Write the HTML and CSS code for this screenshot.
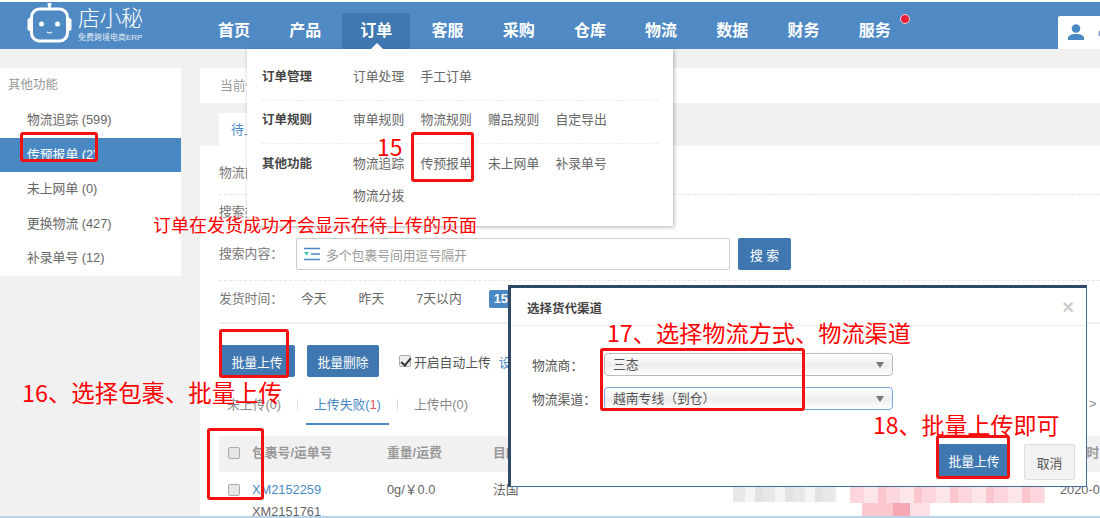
FILE: index.html
```html
<!DOCTYPE html>
<html lang="zh-CN">
<head>
<meta charset="utf-8">
<title>店小秘</title>
<link rel="stylesheet" href="styles.css">
</head>
<body>
<header class="topbar">
  <div class="logo">
    <svg class="robot" viewBox="0 0 46 40" width="46" height="40" aria-hidden="true">
      <path d="M22.500 0v5" stroke="#fff" stroke-width="2.500" fill="none"/>
      <circle cx="22.500" cy="1.500" r="2" fill="#fff"/>
      <rect x="4.500" y="6" width="36" height="32" rx="8" fill="none" stroke="#fff" stroke-width="3"/>
      <path d="M4 15h-1a2.500 2.500 0 0 0-2.500 2.500v8a2.500 2.500 0 0 0 2.500 2.500h1zM41 15h1a2.500 2.500 0 0 1 2.500 2.500v8a2.500 2.500 0 0 1-2.500 2.500h-1z" fill="#fff"/>
      <circle cx="14.500" cy="21" r="2.500" fill="#fff"/>
      <circle cx="30.500" cy="21" r="2.500" fill="#fff"/>
      <path d="M20 29q2.500 2 5 0" stroke="#fff" stroke-width="1.200" fill="none"/>
    </svg>
    <div class="brand">
      <div class="brand-name">店小秘</div>
      <div class="brand-sub">免费跨境电商ERP</div>
    </div>
  </div>
  <nav class="nav">
    <a class="nav-item">首页</a>
    <a class="nav-item">产品</a>
    <a class="nav-item nav-active">订单</a>
    <a class="nav-item">客服</a>
    <a class="nav-item">采购</a>
    <a class="nav-item">仓库</a>
    <a class="nav-item">物流</a>
    <a class="nav-item">数据</a>
    <a class="nav-item">财务</a>
    <a class="nav-item">服务<i class="dot"></i></a>
  </nav>
  <div class="user">
    <svg class="user-icon" viewBox="0 0 18 16" width="18" height="16" aria-hidden="true">
      <circle cx="9" cy="4.500" r="4.300" fill="#4a88c4"/>
      <path d="M1 16v-2c0-2.500 3.500-4 8-4s8 1.500 8 4v2z" fill="#4a88c4"/>
    </svg>
    <span class="user-name">c</span>
  </div>
</header>

<div class="page">
  <aside class="side">
    <div class="side-title">其他功能</div>
    <a class="side-item">物流追踪 (599)</a>
    <a class="side-item side-active">传预报单 (2)</a>
    <a class="side-item">未上网单 (0)</a>
    <a class="side-item">更换物流 (427)</a>
    <a class="side-item">补录单号 (12)</a>
  </aside>

  <main class="main">
    <div class="crumb">当前位置</div>
    <div class="tabs-top"><span class="tab-top">待上传</span></div>
    <section class="panel">
      <div class="row row-carrier"><span class="lbl">物流商：</span></div>
      <div class="row row-kind"><span class="lbl">搜索类型：</span></div>
      <div class="row row-search">
        <span class="lbl">搜索内容：</span>
        <div class="search-box">
          <svg viewBox="0 0 16 14" width="16" height="14" aria-hidden="true">
            <path d="M0 1.500h16M7 7h9M0 12.500h16" stroke="#4a88c4" stroke-width="1.600" fill="none"/>
            <path d="M0 5h5L2.500 8.500z" fill="#3cc0b0"/>
          </svg>
          <span class="placeholder">多个包裹号间用逗号隔开</span>
        </div>
        <button class="btn btn-search">搜 索</button>
      </div>
      <div class="row row-time">
        <span class="lbl">发货时间：</span>
        <span class="time">今天</span><span class="time">昨天</span><span class="time">7天以内</span><span class="time time-on">15天以内</span>
      </div>
      <div class="actions">
        <button class="btn btn-action">批量上传</button>
        <button class="btn btn-action">批量删除</button>
        <label class="auto"><span class="check check-on"></span>开启自动上传</label>
        <a class="link">设置</a>
      </div>
      <div class="subtabs">
        <span class="subtab">未上传(0)</span>
        <span class="subtab subtab-on">上传失败(<b>1</b>)</span>
        <span class="subtab">上传中(0)</span>
        <span class="pager">&gt;</span>
      </div>
      <div class="thead">
        <span class="c-check"><span class="check"></span></span>
        <span class="c-id">包裹号/运单号</span>
        <span class="c-weight">重量/运费</span>
        <span class="c-dest">目的地</span>
        <span class="c-date">发货时间</span>
      </div>
      <div class="trow">
        <span class="c-check"><span class="check"></span></span>
        <span class="c-id"><a class="link">XM2152259</a><br>XM2151761</span>
        <span class="c-weight">0g/￥0.0</span>
        <span class="c-dest">法国</span>
        <span class="mosaic mosaic-grey"></span>
        <span class="mosaic mosaic-pink"></span>
        <span class="mosaic mosaic-pink2"></span>
        <span class="c-date">2020-0</span>
      </div>
    </section>
  </main>
</div>
<div class="bottom-strip"></div>

<div class="menu">
  <i class="menu-arrow"></i>
  <div class="menu-row menu-first"><b class="menu-head">订单管理</b><a class="menu-link">订单处理</a><a class="menu-link">手工订单</a></div>
  <div class="menu-row"><b class="menu-head">订单规则</b><a class="menu-link">审单规则</a><a class="menu-link">物流规则</a><a class="menu-link">赠品规则</a><a class="menu-link">自定导出</a></div>
  <div class="menu-row menu-last"><b class="menu-head">其他功能</b><a class="menu-link">物流追踪</a><a class="menu-link">传预报单</a><a class="menu-link">未上网单</a><a class="menu-link">补录单号</a><a class="menu-link menu-wrap">物流分拨</a></div>
</div>

<div class="modal">
  <div class="modal-head"><span class="modal-title">选择货代渠道</span><span class="modal-x">×</span></div>
  <div class="modal-body">
    <div class="field"><span class="field-lbl">物流商：</span><div class="select">三态<i class="caret"></i></div></div>
    <div class="field"><span class="field-lbl">物流渠道：</span><div class="select select-focus">越南专线（到仓）<i class="caret"></i></div></div>
  </div>
  <div class="modal-foot">
    <button class="btn btn-primary">批量上传</button>
    <button class="btn btn-cancel">取消</button>
  </div>
</div>

<span class="note note-15">15</span>
<span class="note note-tip">订单在发货成功才会显示在待上传的页面</span>
<span class="note note-16">16、选择包裹、批量上传</span>
<span class="note note-17">17、选择物流方式、物流渠道</span>
<span class="note note-18">18、批量上传即可</span>
<i class="mark mark-side"></i>
<i class="mark mark-menu"></i>
<i class="mark mark-upload"></i>
<i class="mark mark-check"></i>
<i class="mark mark-select"></i>
<i class="mark mark-confirm"></i>
</body>
</html>
```

FILE: styles.css
```css
* { box-sizing: border-box; }
html, body { margin: 0; padding: 0; }
body {
  position: relative;
  width: 1100px;
  height: 518px;
  overflow: hidden;
  background: #f1f1f1;
  font-family: "Liberation Sans", "Noto Sans CJK SC", sans-serif;
  font-size: 12.800px;
  color: #666;
  padding-top: 2px;
  display: flex;
  flex-direction: column;
}
body::before { content: ""; position: absolute; left: 0; top: 0; width: 100%; height: 2px; background: #fff; }
a { color: inherit; text-decoration: none; }
button { font-family: inherit; cursor: pointer; }

.topbar { flex: none; height: 47px; background: #4f8ac5; display: flex; position: relative; }
.logo { width: 200px; flex: none; display: flex; padding-left: 27px; }
.robot { flex: none; margin-top: 1px; }
.brand { margin-left: 5px; color: #fff; }
.brand-name { font-size: 22px; line-height: 26px; margin-top: 4px; font-weight: 300; letter-spacing: -0.500px; }
.brand-sub { font-size: 8px; line-height: 10px; margin-top: 1px; opacity: .85; white-space: nowrap; }
.nav { display: flex; gap: 3.200px; padding-top: 11px; }
.nav-item { width: 68px; height: 36px; line-height: 36px; text-align: center; color: #fff; font-size: 16px; font-weight: 700; position: relative; border-radius: 2px 2px 0 0; }
.nav-active { background: #3f78b0; }
.dot { position: absolute; right: -1px; top: 1px; width: 10px; height: 10px; border-radius: 50%; background: #e8213a; border: 1px solid #f3c9cf; }
.user { position: absolute; left: 1058px; top: 14px; width: 42px; height: 33px; background: #fff; border-radius: 2px 0 0 0; padding: 8px 0 0 9px; display: flex; gap: 13px; overflow: hidden; }
.user-icon { flex: none; }
.user-name { color: #4a88c4; font-size: 13px; line-height: 18px; }

.page { flex: 1; min-height: 0; display: flex; padding-top: 19px; overflow: hidden; }
.side { flex: none; width: 181px; height: 208px; background: #fff; }
.side-title { height: 35px; line-height: 35px; padding-left: 8px; color: #999; font-size: 12.500px; }
.side-item { display: block; height: 34.500px; line-height: 33px; padding-left: 27px; color: #666; }
.side-active { background: #4a88c4; color: #fff; }

.main { flex: none; width: 900px; margin-left: 19px; }
.crumb { height: 35px; background: #fff; line-height: 35px; padding-left: 20px; color: #999; }
.tabs-top { height: 43px; padding: 10px 0 0 19px; }
.tab-top { display: block; width: 100px; height: 33px; background: #fff; line-height: 33px; padding-left: 12px; color: #4a88c4; }
.panel { background: #fff; padding: 0 0 0 19px; height: 400px; }
.row { display: flex; }
.lbl { width: 77px; flex: none; color: #777; }
.row-carrier { height: 49px; padding-top: 18px; line-height: 18px; border-bottom: 1px dashed #e6e6e6; }
.row-kind { height: 43px; padding-top: 8px; line-height: 18px; }
.row-search { height: 43px; border-bottom: 1px dashed #e6e6e6; }
.row-search .lbl { line-height: 32px; }
.search-box { width: 434px; height: 32px; border: 1px solid #ccc; border-radius: 2px; display: flex; align-items: center; padding-left: 7px; gap: 6px; flex: none; }
.placeholder { color: #999; }
.btn { border: 0; padding: 0; border-radius: 2px; color: #fff; background: #3f78b0; font-size: 12.800px; }
.btn-search { width: 53px; height: 32px; margin-left: 8px; }
.row-time { height: 43px; border-bottom: 2px solid #eee; padding-top: 9px; line-height: 18px; align-items: flex-start; }
.time { color: #666; margin-right: 32px; }
.lbl + .time { margin-left: 5px; }
.time-on { background: #4a88c4; color: #fff; padding: 0 5px; border-radius: 2px; font-weight: 700; margin-left: -5px; }
.actions { height: 62px; display: flex; align-items: flex-start; padding-top: 21px; }
.btn-action { height: 32px; width: 76px; margin-right: 12px; }
.btn-action + .btn-action { width: 72px; }
.auto { display: flex; align-items: center; height: 32px; margin-left: 8px; color: #555; gap: 3px; }
.link { color: #4a88c4; }
.actions .link { margin: 7px 0 0 8px; }
.check { display: inline-block; width: 12px; height: 12px; border: 1px solid #aaa; border-radius: 2px; background: #e6e6e6; position: relative; }
.check-on { background: #eee; }
.check-on::after { content: ""; position: absolute; left: 3px; top: 0; width: 4px; height: 8px; border: solid #333; border-width: 0 2px 2px 0; transform: rotate(40deg); }
.subtabs { height: 39px; display: flex; position: relative; }
.subtab { height: 39px; line-height: 37px; padding: 0 8px; margin-right: 17px; color: #888; position: relative; }
.subtab + .subtab::before { content: ""; position: absolute; left: -9px; top: 13px; height: 11px; width: 1px; background: #ddd; }
.subtab-on { color: #4a88c4; border-bottom: 2px solid #4a88c4; }
.subtab-on b { color: #e8505b; font-weight: 400; }
.pager { position: absolute; left: 870px; top: 10px; color: #888; }
.thead { margin-top: 11px; height: 36px; background: #f1f1f1; display: flex; align-items: center; color: #999; font-weight: 700; line-height: 18px; padding-bottom: 2px; position: relative; }
.thead .c-check { padding-top: 3px; }
.trow { height: 46px; display: flex; padding-top: 7px; color: #666; line-height: 22px; position: relative; }
.c-check { width: 33px; padding-left: 9px; flex: none; }
.trow .c-check { padding-top: 2px; }
.c-id { width: 135px; flex: none; }
.c-weight { width: 106px; flex: none; }
.c-dest { width: 60px; flex: none; }
.thead .c-date { position: absolute; left: 842px; white-space: nowrap; }
.trow .c-date { position: absolute; left: 841px; top: 7px; white-space: nowrap; }
.mosaic { position: absolute; top: 15px; }
.mosaic-grey { left: 514px; width: 104px; height: 15px; background: repeating-linear-gradient(90deg, #e8e8e8 0 12px, #f5f5f5 12px 22px, #e2e2e2 22px 30px); }
.mosaic-pink { left: 631px; width: 195px; height: 16px; background: repeating-linear-gradient(90deg, #fcd6dc 0 14px, #fde6ea 14px 28px, #fbc5ce 28px 36px); }
.mosaic-pink2 { left: 643px; top: 31px; width: 68px; height: 13px; background: linear-gradient(90deg, #fcc8d0 0 45%, #f8a8b5 45% 70%, #fde0e5 70%); }

.bottom-strip { position: absolute; left: 0; top: 516px; width: 100%; height: 2px; background: #b8d4ea; }

.menu { position: absolute; left: 247px; top: 49px; width: 426px; height: 177px; background: #fff; box-shadow: 1px 1px 4px rgba(60, 60, 90, .4); padding: 0 14px; }
.menu-arrow { position: absolute; left: 124px; top: -6px; border: 6px solid transparent; border-top: 0; border-bottom-color: #fff; }
.menu-row { position: relative; display: flex; flex-wrap: wrap; align-items: flex-start; align-content: flex-start; height: 43px; padding: 10px 0 0 92px; border-bottom: 1px dashed #eee; color: #666; }
.menu-first { height: 52px; padding-top: 19px; }
.menu-last { height: 82px; border: 0; padding-top: 11px; row-gap: 14px; }
.menu-head { position: absolute; left: 1px; color: #444; font-size: 12.500px; font-weight: 700; line-height: 18px; }
.menu-link { width: 67.500px; flex: none; line-height: 18px; }
.menu-wrap { width: 100%; }

.modal { position: absolute; left: 508px; top: 285px; width: 579px; height: 202px; background: #fff; border: 1px solid #3f6d9c; border-top: 3px solid #2f4a68; border-left: 3px solid #2f4a68; }
.modal-head { height: 38px; border-bottom: 1px solid #eee; display: flex; justify-content: space-between; align-items: center; padding: 2px 12px 0 16px; }
.modal-title { font-size: 12.500px; font-weight: 700; color: #444; }
.modal-x { font-size: 20px; font-weight: 700; color: #ccc; }
.modal-body { padding: 27px 0 0 21px; }
.field { display: flex; align-items: center; height: 23px; margin-bottom: 11px; color: #555; }
.field-lbl { width: 72px; flex: none; }
.select { width: 289px; height: 23px; border: 1px solid #bbb; border-radius: 4px; padding-left: 8px; line-height: 21px; color: #555; position: relative; background: linear-gradient(#fff, #eee 55%, #fff); }
.select-focus { border-color: #7aa7e0; }
.caret { position: absolute; right: 8px; top: 8px; border: 4px solid transparent; border-top: 6px solid #777; border-bottom: 0; }
.modal-foot { display: flex; justify-content: flex-end; align-items: flex-start; gap: 14px; padding-right: 11px; margin-top: 34px; }
.btn-primary { width: 72px; height: 33px; }
.btn-cancel { width: 51px; height: 36px; background: #f2f2f2; border: 1px solid #ddd; color: #555; }

.note { position: absolute; color: #f00; font-size: 23px; line-height: 28px; white-space: nowrap; font-family: "Noto Sans CJK SC", "Liberation Sans", sans-serif; }
.note-15 { left: 377px; top: 132px; }
.note-tip { left: 153px; top: 211px; font-size: 18px; line-height: 26px; }
.note-16 { left: 22px; top: 378px; font-size: 23.400px; }
.note-17 { left: 607px; top: 318px; font-size: 23.200px; }
.note-18 { left: 873px; top: 410px; }
.mark { position: absolute; border: 3px solid #f31010; border-radius: 3px; }
.mark-side { left: 20px; top: 132px; width: 78px; height: 30px; }
.mark-menu { left: 411px; top: 132px; width: 63px; height: 50px; }
.mark-upload { left: 219px; top: 329px; width: 70px; height: 49px; }
.mark-check { left: 207px; top: 428px; width: 57px; height: 72px; }
.mark-select { left: 600px; top: 348px; width: 205px; height: 63px; }
.mark-confirm { left: 936px; top: 435px; width: 74px; height: 44px; }
```
